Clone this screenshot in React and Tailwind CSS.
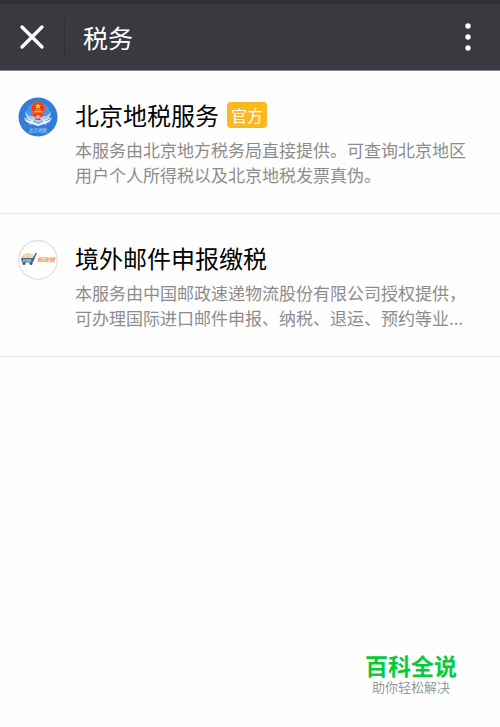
import React from 'react';
import { X } from 'lucide-react';

const TaxBureauLogo = () => (
  <svg viewBox="0 0 40 40" className="h-10 w-10 shrink-0" role="img" aria-label="北京地税">
    <circle cx="20" cy="20" r="19.5" fill="#2f7fda" />
    <circle cx="20" cy="17" r="12" fill="#4a96e6" />
    {/* wings and ribbon */}
    <path d="M7 14c0 5 2 8 6 9l7 3 7-3c4-1 6-4 6-9-2 4-4 5-7 5H14c-3 0-5-1-7-5z" fill="#a9cbf0" />
    <path d="M6 20c2 3 5 4 8 4l6 3 6-3c3 0 6-1 8-4-1 5-4 6-8 7l-6 2-6-2c-4-1-7-2-8-7z" fill="#eaf1fa" />
    <path d="M8 21l7 3M32 21l-7 3M15 22l-3 6M25 22l3 6" stroke="#f3f7fc" strokeWidth="1" />
    {/* emblem */}
    <circle cx="20" cy="11.5" r="7.2" fill="#e23c1c" />
    <circle cx="20" cy="11.5" r="6.6" fill="none" stroke="#ee6d22" strokeWidth="1" />
    <path d="M20 6l1 2 2.1.3-1.5 1.4.4 2.1-2-1-2 1 .4-2.1-1.5-1.4L19 8z" fill="#fdc63a" />
    <path d="M15.5 14h9v1.4h-9zM17 12.4h6v1h-6z" fill="#f8b233" />
    <path d="M14 17h12l-2 3h-2l.5 3h-5l.5-3h-2z" fill="#e04a2c" />
    <path d="M18.5 18.5h3v3h-3z" fill="#f6c9a8" />
    <text x="20" y="35" textAnchor="middle" fontSize="4.5" fill="#c2daf6">北京地税</text>
  </svg>
);

const MailLogo = () => (
  <svg viewBox="0 0 40 40" className="h-10 w-10 shrink-0" role="img" aria-label="EMS">
    <circle cx="20" cy="20" r="19.3" fill="#fff" stroke="#dddddd" strokeWidth="1.2" />
    {/* globe on a trolley */}
    <path d="M4 19c0-3 2-5 6-5s6 2 6 5z" fill="#fce3cb" stroke="#f3b27a" strokeWidth="1" />
    <path d="M10 14v5M5 17h10" stroke="#f3b27a" strokeWidth=".7" />
    <path d="M3 18h12l2.5-5H19l-4 9.5H4z" fill="#3a6b91" />
    <text x="4.5" y="21.5" fontSize="4" fontStyle="italic" fontWeight="bold" fill="#c9d8e4">EMS</text>
    <circle cx="6" cy="23.5" r="1.5" fill="#2c5578" />
    <circle cx="13" cy="23.5" r="1.5" fill="#2c5578" />
    <text x="19" y="22" fontSize="6" fontStyle="italic" fontWeight="bold" fill="#f39a57">邮政税</text>
  </svg>
);

const services = [
  {
    name: '北京地税服务',
    official: true,
    logo: <TaxBureauLogo />,
    description: '本服务由北京地方税务局直接提供。可查询北京地区用户个人所得税以及北京地税发票真伪。',
  },
  {
    name: '境外邮件申报缴税',
    official: false,
    logo: <MailLogo />,
    description: '本服务由中国邮政速递物流股份有限公司授权提供，可办理国际进口邮件申报、纳税、退运、预约等业...',
  },
];

export default function App() {
  return (
    <div className="flex min-h-screen w-full flex-col bg-[#fefefe] font-['Noto_Sans_CJK_SC',sans-serif]">
      <header className="flex items-center border-t-4 border-b border-t-[#303136] border-b-[#85868a] bg-[#393a3f] py-3 pr-5 pl-4 text-white">
        <button type="button" aria-label="关闭" className="flex h-8 w-8 items-center justify-center">
          <X size={40} strokeWidth={2} className="shrink-0" />
        </button>
        <div className="mr-[18px] ml-4 h-9 w-px bg-[#2e2f33]" />
        <h1 className="flex-1 text-[25px] leading-[42px]">税务</h1>
        <button type="button" aria-label="更多" className="flex h-8 w-6 items-center justify-center">
          <svg viewBox="0 0 6 28" className="h-7 w-1.5" fill="currentColor">
            <circle cx="3" cy="3" r="2.7" />
            <circle cx="3" cy="14" r="2.7" />
            <circle cx="3" cy="25" r="2.7" />
          </svg>
        </button>
      </header>

      <main>
        <ul>
          {services.map((service) => (
            <li key={service.name} className="border-b border-[#e6e6e6]">
              <a href="#" className="flex gap-[17px] py-[26px] pr-6 pl-[18px]">
                {service.logo}
                <div className="min-w-0 flex-1">
                  <div className="flex items-center gap-2">
                    <h2 className="text-2xl leading-9 text-black">{service.name}</h2>
                    {service.official && (
                      <span className="rounded-sm bg-[#fbb81f] px-1 text-base leading-[26px] text-white">官方</span>
                    )}
                  </div>
                  <p className="mt-1 text-[17px] leading-[25px] text-[#8c8c8c]">{service.description}</p>
                </div>
              </a>
            </li>
          ))}
        </ul>
      </main>

      <footer className="mt-auto flex justify-end pr-[43px] pb-8">
        <div className="text-center">
          <p className="text-[23px] leading-7 font-bold text-[#07cb3a]">百科全说</p>
          <p className="text-[13px] leading-4 text-[#999999]">助你轻松解决</p>
        </div>
      </footer>
    </div>
  );
}
